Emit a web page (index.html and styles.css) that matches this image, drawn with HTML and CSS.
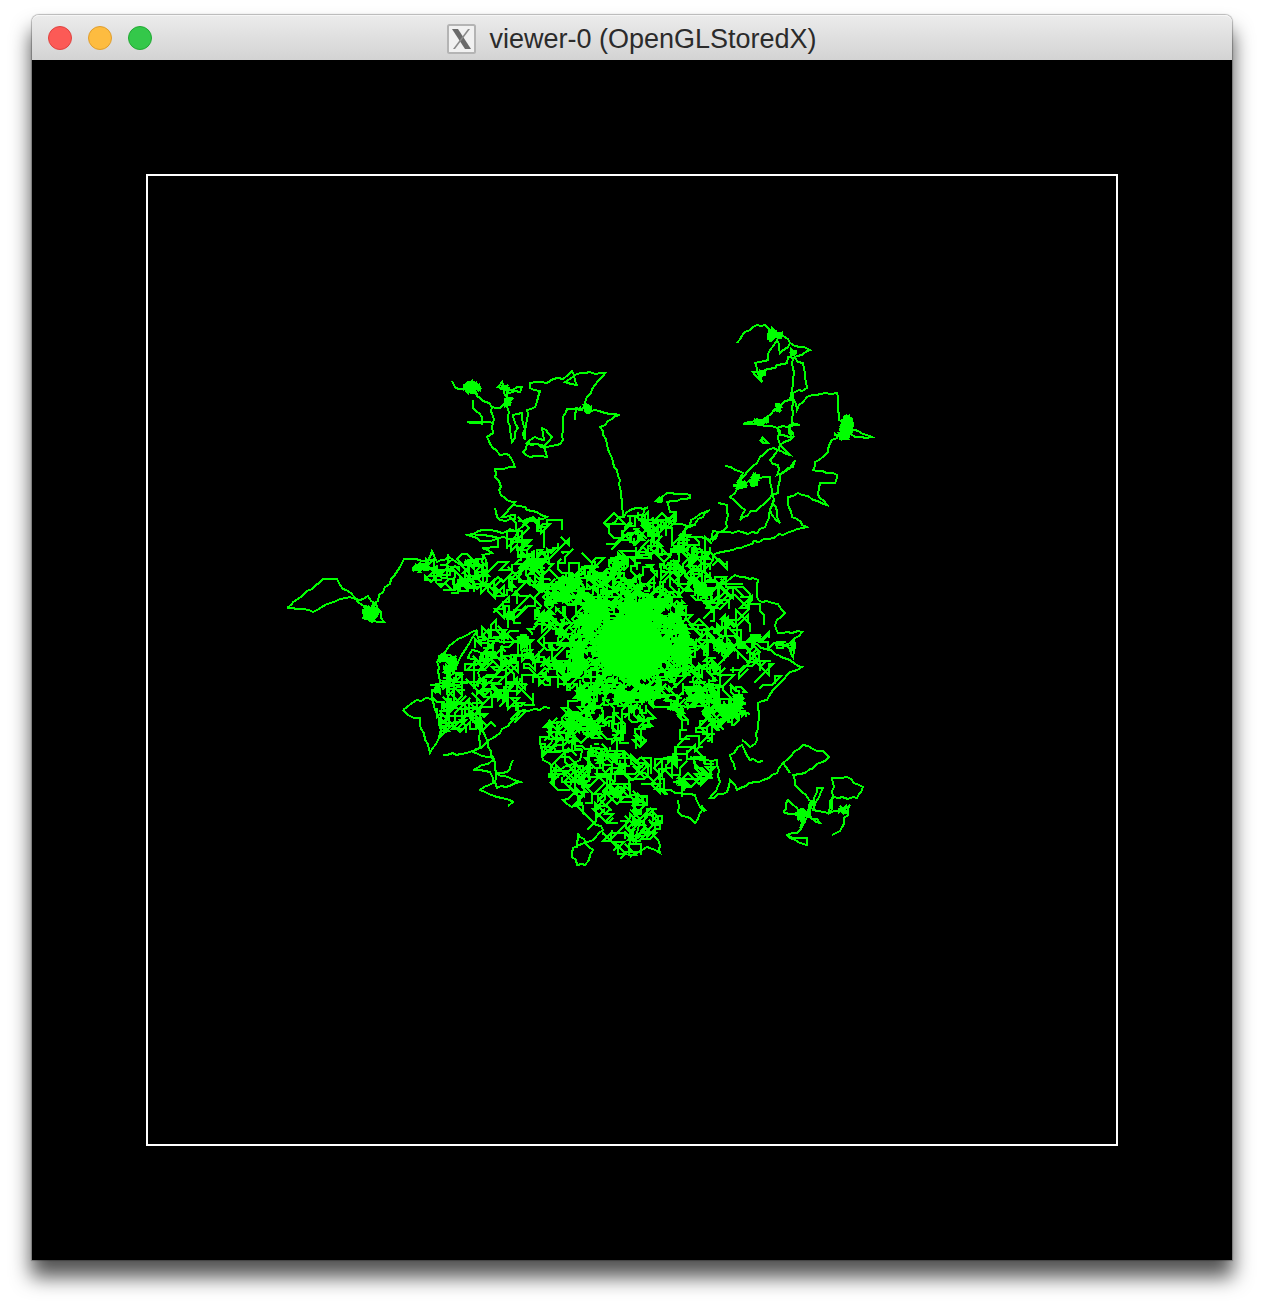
FILE: index.html
```html
<!DOCTYPE html>
<html lang="en">
<head>
<meta charset="utf-8">
<title>viewer-0 (OpenGLStoredX)</title>
<link rel="stylesheet" href="styles.css">
</head>
<body>
<main class="window">
  <header class="titlebar">
    <div class="lights">
      <span class="light light-close"></span>
      <span class="light light-min"></span>
      <span class="light light-max"></span>
    </div>
    <div class="title">
      <svg class="x-icon" width="29" height="30" viewBox="0 0 29 30" aria-hidden="true">
        <rect x="1" y="1" width="27" height="28" rx="1.5" fill="#f1f1f1" stroke="#b4b4b4" stroke-width="2"/>
        <polygon points="5,5 11,5 24,25 18,25" fill="#6a6a6a"/>
        <polygon points="21,5 23,5 8,25 6,25" fill="#8a8a8a"/>
      </svg>
      <span class="title-text">viewer-0 (OpenGLStoredX)</span>
    </div>
  </header>
  <section class="stage">
    <div class="frame">
      <svg id="plot" class="plot" viewBox="146 174 972 972" width="972" height="972" aria-hidden="true">
        <g class="walk">
          <polyline points="287,608 298,599 323,579 337,579 340,585 351,593 362,605 371,609 383,592 400,567 404,559 416,559 427,561 432,551 437,562 449,557 462,566 470,575"/>
          <polyline points="287,608 313,612 330,603 350,597 360,600 368,596 378,610 372,622 362,618 384,622 376,604 366,612 376,616"/>
          <polyline points="452,381 455,387 463,389 472,388 480,398 492,407 493,423 493,433 487,437 490,444 500,455 509,455 515,467 495,469 495,477 499,481 501,495 507,500 515,502 513,505 525,507 527,510 537,512 547,517 525,520 518,530 517,540 507,547"/>
          <polyline points="473,400 473,408 482,417 482,424 467,422 493,423"/>
          <polyline points="492,407 500,408 508,402 502,382 498,387 507,390 522,387 520,392 507,392 507,407 510,430 512,442 518,428 513,415 522,413 525,440 527,410 535,407 540,391 530,388 530,383 547,383 553,379 563,379 572,371 577,385 565,382 580,373 605,373 587,397 585,410 620,415 600,427 603,435 613,462 620,480 623,517"/>
          <polyline points="547,447 527,443 523,452 530,457 547,457 544,447 552,437 542,428 544,440 535,437 527,443 547,447 557,445 563,440 563,417 567,409 577,408 575,420"/>
          <polyline points="495,508 500,520 515,519 515,515 502,517 513,505"/>
          <polyline points="468,535 478,531 490,530 502,533 510,529 518,532 510,545 525,540 468,535 480,541 498,538 498,547 482,548 492,553 483,555 487,567 483,580"/>
          <polyline points="737,343 745,332 757,325 765,325 772,333 780,333 790,343 810,350 793,358 792,390 790,400 778,407 762,420 743,424 760,425 777,428 800,425 792,423 793,393 807,388 803,363 795,358 788,357 787,363 765,370 753,372 762,382 755,363 768,360 770,350 777,340 780,353 790,343"/>
          <polyline points="793,393 797,410 807,397 825,393 837,393 839,420 847,427 855,430 872,437 855,437 847,427 830,443 828,452 815,462 813,470 837,475 835,483 820,483 818,495 827,505 798,493 788,497 792,517 807,527 713,555 710,570"/>
          <polyline points="725,466 743,473 737,483 757,463 760,457 773,448 790,455 780,445 793,437 780,435 777,428 780,445 770,460 778,465 777,475 793,467 795,460 780,475 778,493 772,495 770,477 750,480 730,497 745,510 740,520 760,507 772,495 777,517 780,523 770,510 773,500"/>
          <polyline points="718,503 727,505 727,527 718,533 713,540 713,531 757,533 765,527 773,500"/>
          <polyline points="657,500 667,493 690,495 690,498 667,502 670,513"/>
          <polyline points="612,524 630,510 648,507 640,520 658,520 690,527 710,510 695,518 680,535 710,540 718,533"/>
          <polyline points="783,763 803,745 823,751 829,757 805,773 793,775 795,785 813,802 807,817 800,830 787,835 800,843 807,845 807,838 793,838 787,835"/>
          <polyline points="790,773 783,763 777,773 737,790 730,780 727,792 710,798 720,782 717,760 707,760 690,757"/>
          <polyline points="783,812 788,800 803,815 820,823 810,815 817,788 823,788 813,810 828,813 833,797 832,778 847,777 863,787 857,798 833,797 830,813 843,810 850,805 842,827 832,835"/>
          <polyline points="783,812 803,815 800,828 812,800"/>
          <polyline points="763,761 750,760 742,745 730,755 735,770"/>
          <polyline points="678,800 678,812 695,823 702,810 695,795 665,790"/>
          <polyline points="758,600 778,604 785,613 775,625 778,633 802,632 790,643 775,645 795,647 793,657 787,645"/>
          <polyline points="750,640 783,658 802,667 790,672 780,683 773,690 767,700 758,703 758,723 757,740 750,747 742,740"/>
          <polyline points="700,600 735,575 758,580 758,600"/>
          <polyline points="430,685 443,687 470,682 488,683 500,667 510,660"/>
          <polyline points="477,630 453,643 437,662 443,690 477,630 480,643 492,645 492,655 472,650 468,658 480,662 478,687"/>
          <polyline points="403,710 417,700 432,699 438,715 440,733 430,753 420,725 420,718 408,715 403,710"/>
          <polyline points="443,755 467,753 480,747 480,723 493,760 473,770 490,772 493,783 480,790 497,797 510,800 513,802 508,806"/>
          <polyline points="513,760 507,772 495,773 520,782 497,788 493,757 473,752 500,733 510,723 523,710 550,708"/>
          <polyline points="540,740 543,760 557,770 580,760 582,750 543,753 553,738"/>
          <polyline points="590,752 588,767 582,778 572,780 570,787 580,792 563,800 572,807 582,803 583,813 593,822 603,830 593,840 573,848 572,857 577,865 585,865 593,850 578,833 577,848"/>
          <polyline points="630,857 647,847 660,853 658,840 645,827 635,840 640,820 630,810"/>
        </g>
      </svg>
    </div>
  </section>
</main>
<script src="script.js"></script>
</body>
</html>
```

FILE: styles.css
```css
html, body {
  margin: 0;
  padding: 0;
  background: #fff;
  overflow: hidden;
}

body {
  width: 1264px;
  height: 1308px;
  padding: 15px 32px 0;
  box-sizing: border-box;
}

.window {
  width: 1200px;
  height: 1245px;
  display: flex;
  flex-direction: column;
  border-radius: 7px 7px 0 0;
  box-shadow:
    0 0 1px 1px rgba(0, 0, 0, 0.26),
    0 16px 20px 1px rgba(0, 0, 0, 0.68);
}

.titlebar {
  position: relative;
  height: 45px;
  flex: none;
  display: flex;
  align-items: center;
  justify-content: center;
  box-sizing: border-box;
  padding-top: 1px;
  border-radius: 7px 7px 0 0;
  border-top: 1px solid #f6f6f6;
  background: linear-gradient(#ebebeb, #d3d3d3);
}

.lights {
  position: absolute;
  left: 16px;
  top: 10px;
  display: flex;
  gap: 16px;
}

.light {
  width: 24px;
  height: 24px;
  box-sizing: border-box;
  border-radius: 50%;
  border: 1px solid;
}

.light-close { background: #fc5a56; border-color: #e04340; }
.light-min   { background: #fdbc40; border-color: #e09e2e; }
.light-max   { background: #34c84a; border-color: #22a934; }

.title {
  display: flex;
  align-items: center;
  gap: 13px;
}

.x-icon { display: block; }

.title-text {
  font-family: "Liberation Sans", Arial, sans-serif;
  font-size: 27px;
  line-height: 30px;
  color: #2b2b2b;
  white-space: nowrap;
}

.stage {
  width: 1200px;
  height: 1200px;
  flex: none;
  background: #000;
  display: flex;
  align-items: center;
  justify-content: center;
}

.frame {
  position: relative;
  width: 972px;
  height: 972px;
  box-sizing: border-box;
  border: 2px solid #fff;
}

.plot {
  position: absolute;
  left: -2px;
  top: -2px;
  display: block;
}

.walk polyline,
.walk path {
  fill: none;
  stroke: #00ff00;
  stroke-width: 2;
  shape-rendering: crispEdges;
}

.core {
  fill: #00ff00;
}
```

FILE: script.js
```js
// Roughens the traced arms and fills the dense parts of the plot with seeded random walks.
(function () {
  var NS = "http://www.w3.org/2000/svg";
  var svg = document.getElementById("plot");
  var group = svg.querySelector(".walk");
  var seed = 20240611;

  function rnd() {
    seed = (seed + 0x6d2b79f5) | 0;
    var t = Math.imul(seed ^ (seed >>> 15), 1 | seed);
    t = (t + Math.imul(t ^ (t >>> 7), 61 | t)) ^ t;
    return ((t ^ (t >>> 14)) >>> 0) / 4294967296;
  }

  // Walks stay mostly axis-aligned, with some diagonals.
  var DIRS = [[1,0],[0,1],[-1,0],[0,-1],[1,0],[0,1],[-1,0],[0,-1],[1,1],[-1,1],[-1,-1],[1,-1]];

  // Outline of the whole dense region.
  var HULL = [
    [405,560],[430,550],[470,530],[500,505],[545,515],[620,510],[690,490],[720,505],
    [735,575],[758,600],[785,615],[803,660],[770,700],[757,745],[715,790],[700,825],
    [660,855],[625,862],[575,865],[565,800],[540,770],[540,712],[522,712],[510,760],
    [515,805],[475,795],[440,755],[430,690],[440,630],[485,620],[500,600],[440,600],[405,580]
  ];

  function inHull(x, y) {
    var c = false;
    for (var i = 0, j = HULL.length - 1; i < HULL.length; j = i++) {
      var a = HULL[i], b = HULL[j];
      if ((a[1] > y) !== (b[1] > y) && x < (b[0] - a[0]) * (y - a[1]) / (b[1] - a[1]) + a[0]) {
        c = !c;
      }
    }
    return c;
  }

  // cx, cy, rx, ry, steps, min step, max step, steps per restart
  var CLUMPS = [
    [630,647,60,56,3000,2,4,60],
    [630,650,105,95,2600,2,6,40],
    [625,645,145,125,620,4,12,18],
    [555,575,30,28,220,2,6,30],
    [520,590,50,34,170,3,10,16],
    [455,572,36,22,240,2,8,18],
    [540,540,40,24,90,4,11,12],
    [575,605,44,34,180,2,7,25],
    [655,535,46,26,210,3,9,16],
    [700,570,40,32,130,3,11,14],
    [650,575,64,36,220,3,9,20],
    [730,708,28,26,380,2,6,30],
    [725,660,54,50,240,3,11,16],
    [765,660,28,30,60,4,11,10],
    [735,610,34,36,70,4,11,10],
    [478,695,46,46,220,3,11,12],
    [455,720,32,38,80,4,11,10],
    [505,660,38,36,150,3,10,14],
    [600,775,54,36,300,3,11,14],
    [680,770,36,30,120,4,11,12],
    [628,815,36,32,220,2,9,16],
    [612,850,32,10,30,3,9,10],
    [570,735,34,24,170,3,9,12]
  ];

  // small solid knots along the arms
  var KNOTS = [
    [472,388,9,7,220],[370,609,9,11,260],[508,402,5,5,50],[508,388,7,4,40],
    [585,410,7,6,70],[775,335,8,8,120],[778,407,4,5,50],[762,421,9,4,90],
    [793,352,4,6,30],[847,428,7,13,300],[842,435,8,5,80],[762,375,4,5,30],
    [740,484,8,5,70],[755,480,6,7,70],[660,500,5,3,30],[803,815,7,7,120],
    [843,810,5,5,50],[702,810,3,5,24],[447,663,10,11,280],[440,688,8,5,60],
    [765,440,6,4,24],[790,430,5,6,24],[793,645,3,6,24],[685,781,9,6,70],
    [637,805,9,10,120],[420,568,8,5,50]
  ];

  function fmt(x, y) { return x + " " + y; }

  function startPoint(c) {
    for (var tries = 0; tries < 30; tries++) {
      var a = rnd() * Math.PI * 2, r = Math.sqrt(rnd());
      var x = Math.round(c[0] + Math.cos(a) * r * c[2]);
      var y = Math.round(c[1] + Math.sin(a) * r * c[3]);
      if (inHull(x, y)) { return [x, y]; }
    }
    return [c[0], c[1]];
  }

  function walkClump(c, out) {
    var cx = c[0], cy = c[1], rx = c[2], ry = c[3], n = c[4], every = c[7];
    var x = 0, y = 0;
    for (var i = 0; i < n; i++) {
      if (i % every === 0) {
        var s = startPoint(c);
        x = s[0]; y = s[1];
        out.push("M" + fmt(x, y));
      }
      var d = DIRS[Math.floor(rnd() * DIRS.length)];
      var len = c[5] + Math.floor(rnd() * (c[6] - c[5] + 1));
      var nx = x + d[0] * len, ny = y + d[1] * len;
      if (!inHull(nx, ny)) { continue; }
      var ex = (nx - cx) / rx, ey = (ny - cy) / ry;
      if (ex * ex + ey * ey > 1 && rnd() > 0.1) { continue; }
      x = nx; y = ny;
      out.push("L" + fmt(x, y));
    }
  }

  function walkKnot(c, out) {
    var x = c[0], y = c[1];
    out.push("M" + fmt(x, y));
    for (var i = 0; i < c[4]; i++) {
      var d = DIRS[Math.floor(rnd() * DIRS.length)];
      var len = 1 + Math.floor(rnd() * 3);
      var nx = x + d[0] * len, ny = y + d[1] * len;
      var ex = (nx - c[0]) / c[2], ey = (ny - c[1]) / c[3];
      if (ex * ex + ey * ey > 1) { continue; }
      x = nx; y = ny;
      out.push("L" + fmt(x, y));
    }
  }

  // Break every traced segment into short jittered pieces so the arms look like walks too.
  function roughen(line) {
    var pts = line.getAttribute("points").trim().split(/\s+/).map(function (p) {
      return p.split(",").map(Number);
    });
    var res = [pts[0].join(",")];
    for (var i = 1; i < pts.length; i++) {
      var a = pts[i - 1], b = pts[i];
      var dist = Math.hypot(b[0] - a[0], b[1] - a[1]);
      var pieces = Math.max(1, Math.round(dist / 5));
      for (var k = 1; k <= pieces; k++) {
        var t = k / pieces;
        var jx = k === pieces ? 0 : Math.round((rnd() - 0.5) * 2.4);
        var jy = k === pieces ? 0 : Math.round((rnd() - 0.5) * 2.4);
        res.push(Math.round(a[0] + (b[0] - a[0]) * t + jx) + "," + Math.round(a[1] + (b[1] - a[1]) * t + jy));
      }
    }
    line.setAttribute("points", res.join(" "));
  }

  Array.prototype.forEach.call(group.querySelectorAll("polyline"), roughen);

  var parts = [];
  CLUMPS.forEach(function (c) { walkClump(c, parts); });
  KNOTS.forEach(function (c) { walkKnot(c, parts); });

  var path = document.createElementNS(NS, "path");
  path.setAttribute("d", parts.join(""));
  group.appendChild(path);

  var core = document.createElementNS(NS, "ellipse");
  core.setAttribute("class", "core");
  core.setAttribute("cx", "630");
  core.setAttribute("cy", "647");
  core.setAttribute("rx", "34");
  core.setAttribute("ry", "32");
  svg.appendChild(core);
})();
```
